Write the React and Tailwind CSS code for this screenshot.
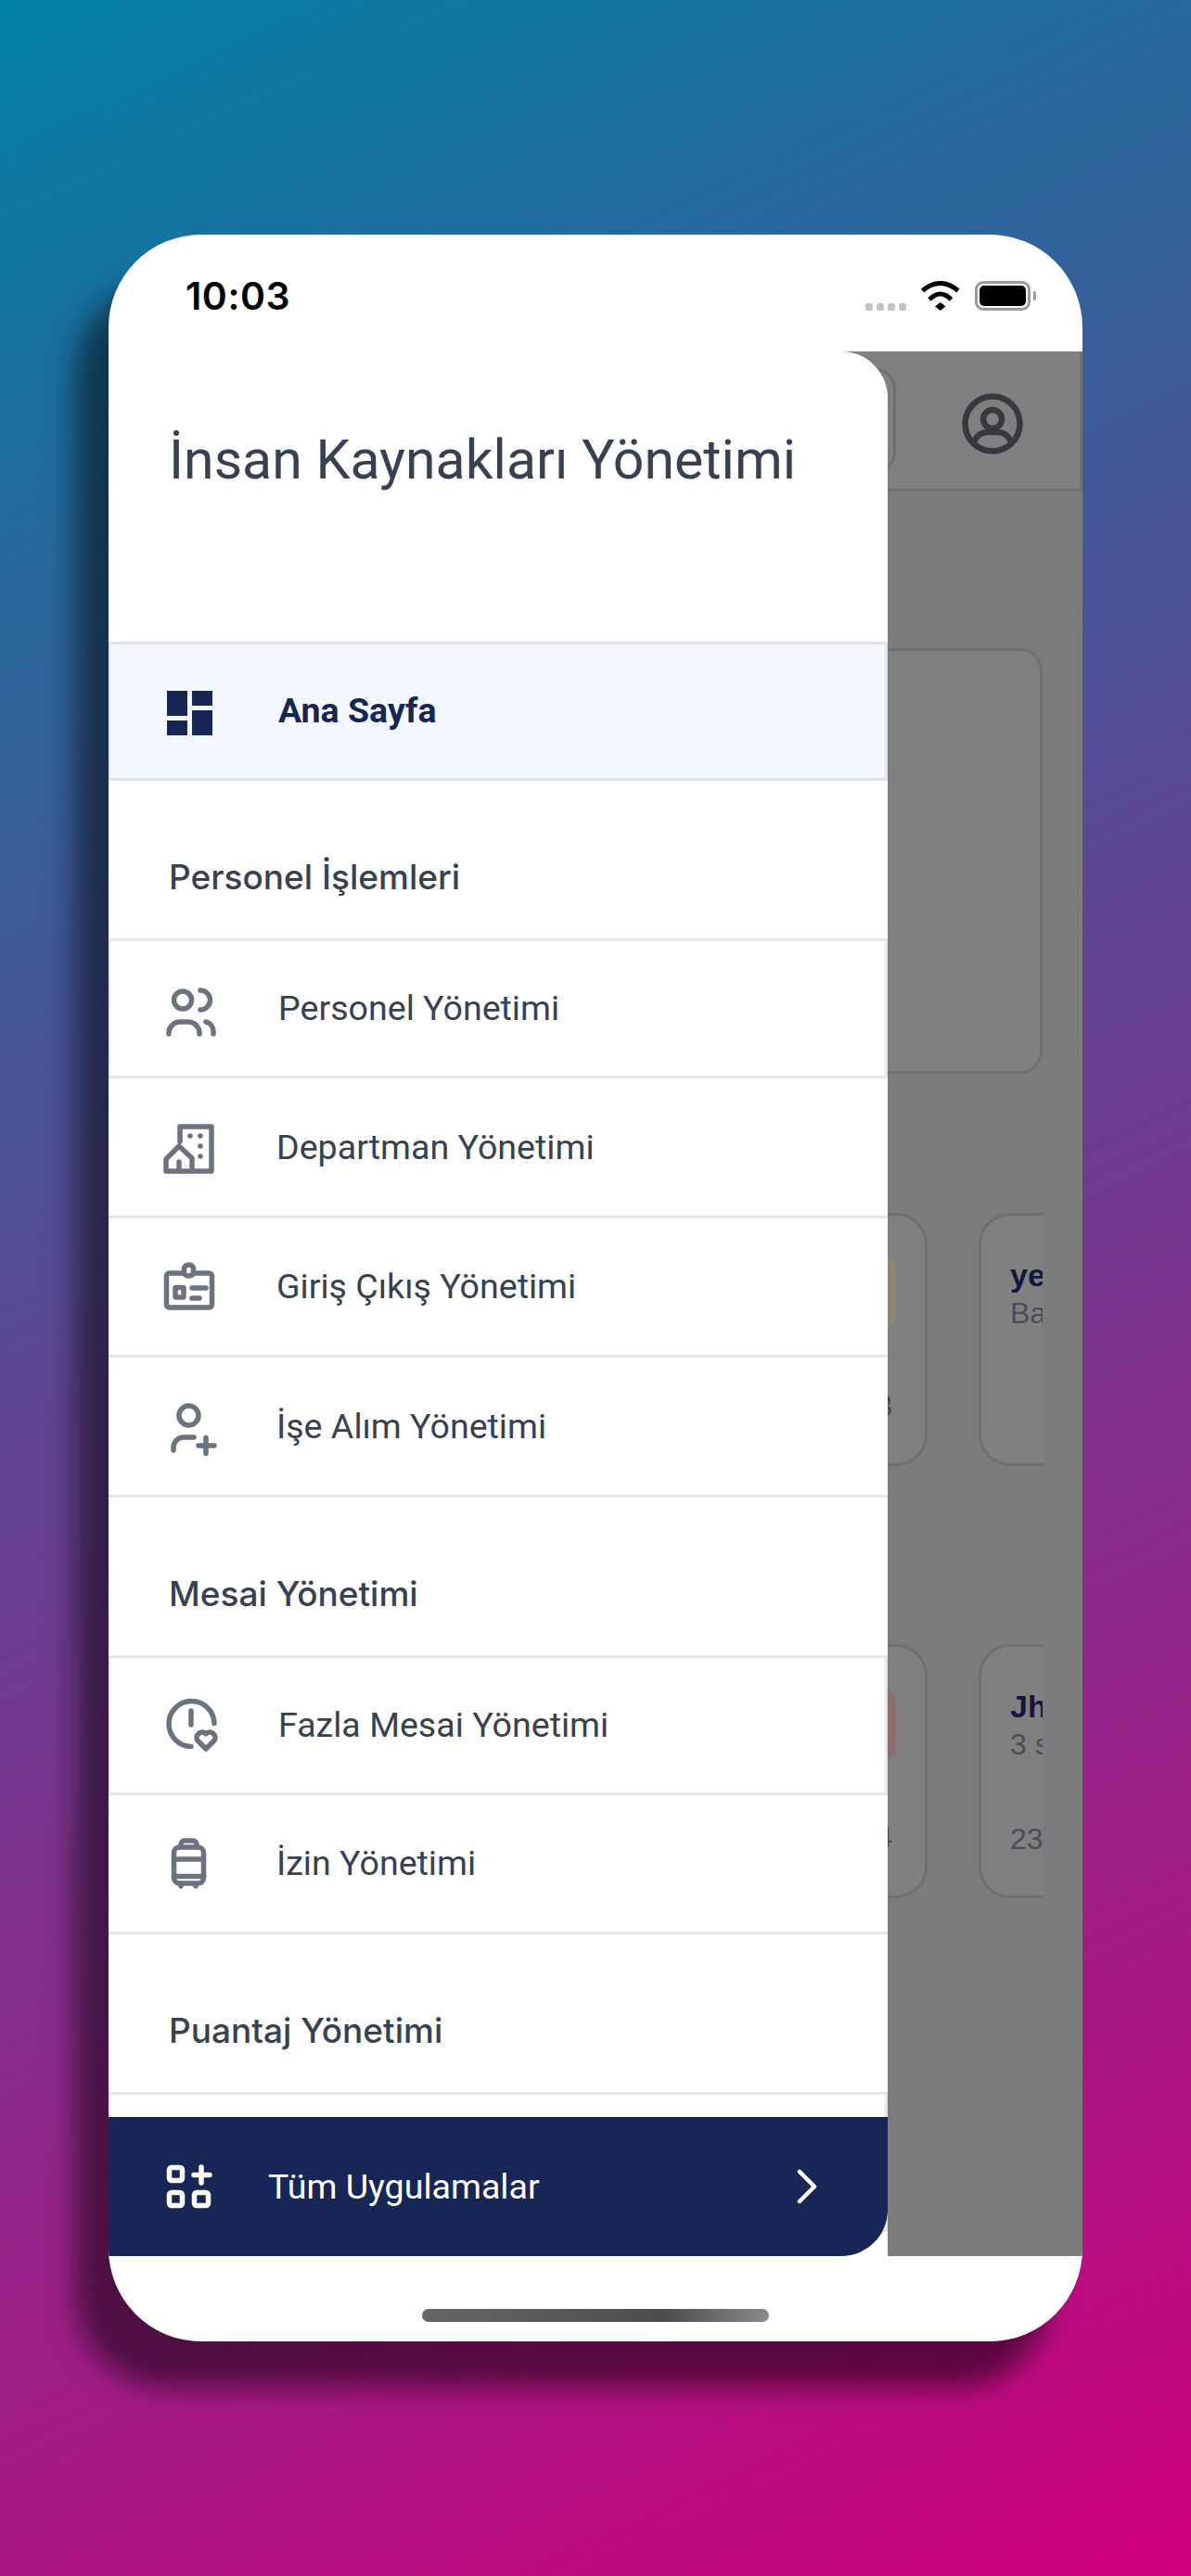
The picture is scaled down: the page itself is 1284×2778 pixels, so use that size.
import React from 'react';

const UsersIcon = () => (
  <svg viewBox="0 0 64 64" className="w-16 h-16 shrink-0" fill="none" stroke="#6b7280" strokeWidth="5.500" strokeLinecap="round" strokeLinejoin="round">
    <ellipse cx="23" cy="22.500" rx="9.500" ry="9.500" />
    <path d="M42 12a10 10 0 0 1 0 21" />
    <path d="M8 59v-2a12 12 0 0 1 12-11h9a12 12 0 0 1 12 11v2" />
    <path d="M48 46a10.500 10.500 0 0 1 8 10.500V59" />
  </svg>
);

const BuildingIcon = () => (
  <svg viewBox="0 0 64 64" className="w-16 h-16 shrink-0" fill="none" stroke="#6b7280" strokeWidth="5.500" strokeLinecap="round" strokeLinejoin="round">
    <path d="M22 26V10h34v48H7V45l14-14 14 13v14" />
    <path d="M21 58V48" />
    <g fill="#6b7280" stroke="none">
      <circle cx="33" cy="20" r="2.800" />
      <circle cx="44" cy="20" r="2.800" />
      <circle cx="44" cy="31" r="2.800" />
      <circle cx="44" cy="42" r="2.800" />
    </g>
  </svg>
);

const BadgeIcon = () => (
  <svg viewBox="0 0 64 64" className="w-16 h-16 shrink-0" fill="none" stroke="#6b7280" strokeWidth="5.500" strokeLinecap="round" strokeLinejoin="round">
    <rect x="7.500" y="18" width="49" height="37" rx="3" />
    <rect x="26.500" y="9" width="10" height="12" rx="4.500" fill="#ffffff" />
    <rect x="17" y="33.500" width="9" height="10.500" rx="1" />
    <path d="M35 34h15M35 45h8" />
  </svg>
);

const UserPlusIcon = () => (
  <svg viewBox="0 0 64 64" className="w-16 h-16 shrink-0" fill="none" stroke="#6b7280" strokeWidth="5.500" strokeLinecap="round" strokeLinejoin="round">
    <circle cx="31.500" cy="20.500" r="10.500" />
    <path d="M15 58v-3a11 11 0 0 1 11-11h11" />
    <path d="M50 44.500v17M42 53h17" />
  </svg>
);

const ClockHeartIcon = () => (
  <svg viewBox="0 0 64 64" className="w-16 h-16 shrink-0" fill="none" stroke="#6b7280" strokeWidth="5.500" strokeLinecap="round" strokeLinejoin="round">
    <path d="M57 30.500A24.500 24.500 0 1 0 32 55.500" />
    <path d="M32 17v15" />
    <path d="M48 58l-9-9a5.800 5.800 0 0 1 9-7.200 5.800 5.800 0 0 1 9 7.200z" />
  </svg>
);

const LuggageIcon = () => (
  <svg viewBox="0 0 64 64" className="w-16 h-16 shrink-0" fill="none" stroke="#6b7280" strokeWidth="5.500" strokeLinecap="round" strokeLinejoin="round">
    <rect x="15.500" y="15" width="32" height="39" rx="6" />
    <path d="M23 15v-3a4 4 0 0 1 4-4h9a4 4 0 0 1 4 4v3" />
    <path d="M15.500 28h32M15.500 46.500h32M23 55v2M39 55v2" />
  </svg>
);

const DashboardIcon = () => (
  <svg viewBox="0 0 64 64" className="w-16 h-16 shrink-0" fill="#172655">
    <rect x="6" y="10" width="22" height="27" />
    <rect x="33" y="10" width="22" height="16" />
    <rect x="6" y="42" width="22" height="16" />
    <rect x="33" y="31" width="22" height="27" />
  </svg>
);

const AppsIcon = () => (
  <svg viewBox="0 0 64 64" className="w-16 h-16 shrink-0" fill="none" stroke="#ffffff" strokeWidth="5.500" strokeLinecap="round" strokeLinejoin="round">
    <rect x="10.500" y="11.500" width="14" height="14" rx="2.500" />
    <rect x="10.500" y="38.500" width="14" height="14" rx="2.500" />
    <rect x="37.500" y="38.500" width="15" height="14" rx="2.500" />
    <path d="M45 11v17M37 19.500h17" />
  </svg>
);

const StatusIcons = () => (
  <div className="flex items-center">
    <div className="flex gap-[4px] mt-[23px] mr-[15px]">
      <span className="w-[8px] h-[8px] rounded-[2px] bg-[#c4c4c4]" />
      <span className="w-[8px] h-[8px] rounded-[2px] bg-[#c4c4c4]" />
      <span className="w-[8px] h-[8px] rounded-[2px] bg-[#c4c4c4]" />
      <span className="w-[8px] h-[8px] rounded-[2px] bg-[#c4c4c4]" />
    </div>
    <svg viewBox="0 0 44 32" className="w-[44px] h-[32px] mr-[15px]" fill="none" stroke="#000000" strokeWidth="5">
      <path d="M2.500 10.500Q21.700 -5.500 41 10.500" />
      <path d="M10 20Q21.700 8 33.500 20" />
      <path d="M16 27.500L21.700 23L27.500 27.500L21.700 32Z" fill="#000000" stroke="none" />
    </svg>
    <div className="flex items-center">
      <div className="w-[60px] h-[32px] rounded-[9px] border-[3px] border-[#9a9a9a] p-[2px]">
        <div className="w-full h-full rounded-[5px] bg-black" />
      </div>
      <span className="w-[3px] h-[10px] rounded-r-[2px] bg-[#9a9a9a] ml-[3px]" />
    </div>
  </div>
);

const SectionTitle = ({ children }) => (
  <div className="h-[170px] pt-[86px] pl-[65px] text-[37px] leading-[36px] font-medium text-[#374151] font-['Inter',sans-serif]">{children}</div>
);

const MenuRow = ({ icon, label, boxed }) => (
  <div className={boxed
    ? 'h-[151px] flex items-center pl-[55px] border-l-2 border-r-[3px] border-y-[3px] border-[#e5e5e5]'
    : 'h-[150.5px] flex items-center pl-[55px] border-b-[3px] border-[#e5e5e5]'}>
    {icon}
    <span className="ml-[62px] text-[37.600px] text-[#374151]">{label}</span>
  </div>
);

const SmallCard = ({ children }) => (
  <div className="w-[400px] h-full shrink-0 rounded-[34px] border-[3px] border-[#6f7070] bg-[#808080] px-[31px] pt-[46px] font-['Liberation_Sans',sans-serif]">
    {children}
  </div>
);

// gray app behind the open drawer
const BackgroundApp = () => (
  <div className="h-full bg-[#7b7c7d]">
    <div className="h-[151px] bg-[#808080] border-b-[3px] border-r-[3px] border-[#6f7070] flex items-center justify-end pr-[59px]">
      <div className="w-[300px] h-[113px] rounded-[22px] border-[3px] border-[#6f7070] mr-[69px]" />
      <svg viewBox="0 0 70 70" className="w-[70px] h-[70px] mt-[8px]" fill="none" stroke="#37393e" strokeWidth="6.500" strokeLinecap="round">
        <circle cx="35" cy="35" r="29.500" />
        <circle cx="35" cy="30" r="10" />
        <path d="M15 54Q20 44 30 44H40Q50 44 55 54" />
      </svg>
    </div>
    <div className="pl-[483px] pr-[43px]">
      <div className="h-[459px] mt-[169px] rounded-[24px] border-[3px] border-[#6f7070] bg-[#808080]" />
      <div className="flex gap-[55px] h-[273px] mt-[150px] overflow-hidden">
        <SmallCard>
          <div className="flex justify-end -mt-[3px]">
            <div className="w-[80px] h-[80px] rounded-[16px] bg-[#8f8572]" />
          </div>
          <p className="text-right mt-[64px] pr-[4px] text-[32px] leading-[36px] text-[#45474f]">3</p>
        </SmallCard>
        <SmallCard>
          <p className="text-[34px] leading-[36px] font-bold text-[#11173f]">yeni</p>
          <p className="mt-[5px] text-[32px] leading-[36px] text-[#4a4d58]">Başvuru</p>
        </SmallCard>
      </div>
      <div className="flex gap-[55px] h-[274px] mt-[192px] overflow-hidden">
        <SmallCard>
          <div className="flex justify-end -mt-[3px]">
            <div className="w-[80px] h-[80px] rounded-[16px] bg-[#8c6e6e]" />
          </div>
          <p className="text-right mt-[64px] pr-[4px] text-[32px] leading-[36px] text-[#45474f]">4</p>
        </SmallCard>
        <SmallCard>
          <p className="text-[34px] leading-[36px] font-bold text-[#11173f]">Jhon</p>
          <p className="mt-[5px] text-[32px] leading-[36px] text-[#4a4d58]">3 saat</p>
          <p className="mt-[66px] text-[32px] leading-[36px] text-[#4a4d58]">23 Mart</p>
        </SmallCard>
      </div>
    </div>
  </div>
);

const Drawer = () => (
  <div className="absolute left-0 top-0 bottom-0 w-[840px] bg-white rounded-tr-[50px] overflow-hidden">
    <div className="h-[313px] pt-[82px] pl-[65px]">
      <h1 className="text-[59px] leading-[70px] font-normal text-[#374151] whitespace-nowrap">İnsan Kaynakları Yönetimi</h1>
    </div>
    <div className="h-[150px] flex items-center pl-[55px] bg-[#f4f8ff] border-l-2 border-r-[3px] border-y-[3px] border-[#dfe3ea]">
      <DashboardIcon />
      <span className="ml-[62px] -mt-[2px] text-[37.500px] font-bold text-[#172655]">Ana Sayfa</span>
    </div>
    <SectionTitle>Personel İşlemleri</SectionTitle>
    <MenuRow boxed icon={<UsersIcon />} label="Personel Yönetimi" />
    <MenuRow icon={<BuildingIcon />} label="Departman Yönetimi" />
    <MenuRow icon={<BadgeIcon />} label="Giriş Çıkış Yönetimi" />
    <MenuRow icon={<UserPlusIcon />} label="İşe Alım Yönetimi" />
    <SectionTitle>Mesai Yönetimi</SectionTitle>
    <MenuRow boxed icon={<ClockHeartIcon />} label="Fazla Mesai Yönetimi" />
    <MenuRow icon={<LuggageIcon />} label="İzin Yönetimi" />
    <SectionTitle>Puantaj Yönetimi</SectionTitle>
    <MenuRow boxed icon={null} label="" />
    <div className="absolute left-0 right-0 bottom-0 h-[150px] bg-[#172655] rounded-br-[50px] flex items-center pl-[55px] pr-[76px]">
      <AppsIcon />
      <span className="ml-[53px] text-[37.600px] text-white">Tüm Uygulamalar</span>
      <svg viewBox="0 0 22 38" className="ml-auto w-[22px] h-[38px]" fill="none" stroke="#ffffff" strokeWidth="4.500" strokeLinecap="round" strokeLinejoin="round">
        <path d="M3 3l16 16L3 35" />
      </svg>
    </div>
  </div>
);

export default function App() {
  return (
    <div className="w-[1284px] h-[2778px] pt-[253px] pl-[117px] bg-[linear-gradient(155deg,#0080a5,#d0007c)] font-['Roboto',sans-serif]">
      <div className="w-[1050px] h-[2272px] flex flex-col rounded-[100px] bg-white overflow-hidden shadow-[-36px_50px_30px_rgba(0,0,0,0.5)]">
        <div className="h-[126px] shrink-0 flex items-center justify-between pt-[6px] pl-[83px] pr-[50px]">
          <span className="mt-[2px] text-[41px] font-semibold tracking-[0.5px] text-black font-['Inter',sans-serif]">10:03</span>
          <StatusIcons />
        </div>
        <div className="relative h-[2054px] shrink-0">
          <BackgroundApp />
          <Drawer />
        </div>
        <div className="flex-1 flex justify-center pt-[57px]">
          <div className="w-[374px] h-[14px] rounded-full bg-[linear-gradient(90deg,#666,#4d4d4d_70%,#8a8a8a)]" />
        </div>
      </div>
    </div>
  );
}
